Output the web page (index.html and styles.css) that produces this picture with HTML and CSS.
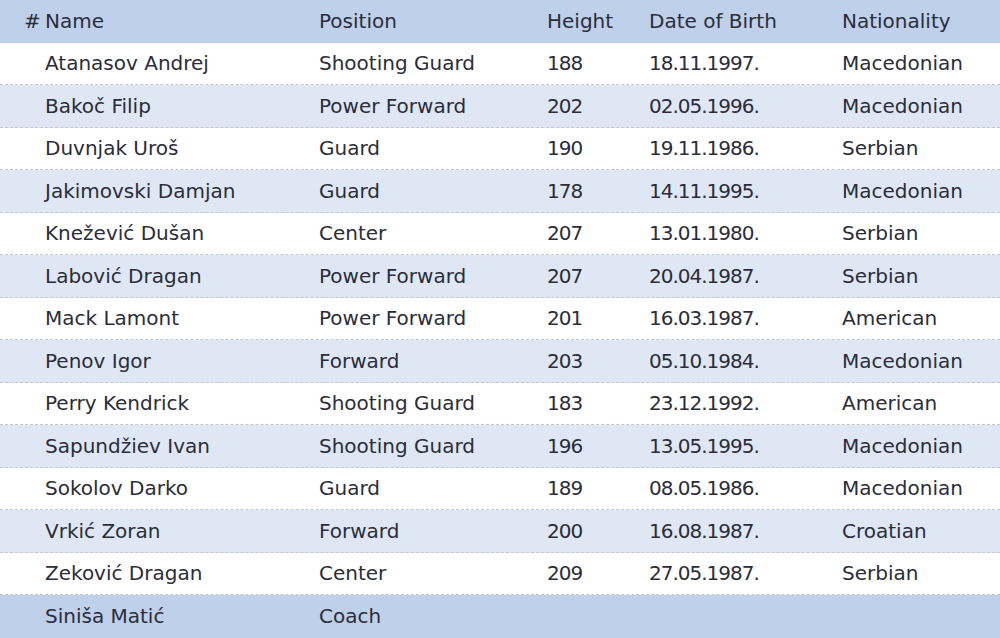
FILE: index.html
```html
<!DOCTYPE html>
<html>
<head>
<meta charset="utf-8">
<link rel="stylesheet" href="styles.css">
</head>
<body>
<div class="roster">
  <div class="row head">
    <div class="num">#</div><div>Name</div><div>Position</div><div>Height</div><div>Date of Birth</div><div>Nationality</div>
  </div>
  <div class="row"><div></div><div>Atanasov Andrej</div><div>Shooting Guard</div><div>188</div><div>18.11.1997.</div><div>Macedonian</div></div>
  <div class="row alt"><div></div><div>Bakoč Filip</div><div>Power Forward</div><div>202</div><div>02.05.1996.</div><div>Macedonian</div></div>
  <div class="row"><div></div><div>Duvnjak Uroš</div><div>Guard</div><div>190</div><div>19.11.1986.</div><div>Serbian</div></div>
  <div class="row alt"><div></div><div>Jakimovski Damjan</div><div>Guard</div><div>178</div><div>14.11.1995.</div><div>Macedonian</div></div>
  <div class="row"><div></div><div>Knežević Dušan</div><div>Center</div><div>207</div><div>13.01.1980.</div><div>Serbian</div></div>
  <div class="row alt"><div></div><div>Labović Dragan</div><div>Power Forward</div><div>207</div><div>20.04.1987.</div><div>Serbian</div></div>
  <div class="row"><div></div><div>Mack Lamont</div><div>Power Forward</div><div>201</div><div>16.03.1987.</div><div>American</div></div>
  <div class="row alt"><div></div><div>Penov Igor</div><div>Forward</div><div>203</div><div>05.10.1984.</div><div>Macedonian</div></div>
  <div class="row"><div></div><div>Perry Kendrick</div><div>Shooting Guard</div><div>183</div><div>23.12.1992.</div><div>American</div></div>
  <div class="row alt"><div></div><div>Sapundžiev Ivan</div><div>Shooting Guard</div><div>196</div><div>13.05.1995.</div><div>Macedonian</div></div>
  <div class="row"><div></div><div>Sokolov Darko</div><div>Guard</div><div>189</div><div>08.05.1986.</div><div>Macedonian</div></div>
  <div class="row alt"><div></div><div>Vrkić Zoran</div><div>Forward</div><div>200</div><div>16.08.1987.</div><div>Croatian</div></div>
  <div class="row"><div></div><div>Zeković Dragan</div><div>Center</div><div>209</div><div>27.05.1987.</div><div>Serbian</div></div>
  <div class="row coach"><div></div><div>Siniša Matić</div><div>Coach</div><div></div><div></div><div></div></div>
</div>
</body>
</html>
```

FILE: styles.css
```css
html, body {
  margin: 0;
  padding: 0;
  background: #ffffff;
}
.roster {
  width: 1000px;
  height: 638px;
  overflow: hidden;
  font-family: "DejaVu Sans", sans-serif;
  font-size: 20px;
  color: #2b2d3a;
}
.row {
  display: grid;
  grid-template-columns: 45px 274px 228px 102px 193px 158px;
  align-items: center;
  height: 42.5px;
  box-sizing: border-box;
  border-bottom: 1px dashed #c4c8ce;
  white-space: nowrap;
}
.row:not(.head) > div:nth-child(4),
.row:not(.head) > div:nth-child(5) {
  letter-spacing: -1px;
}
.row.alt {
  background: #dfe7f4;
}
.row.head {
  background: #bfd0ea;
  border-bottom: none;
}
.row.head .num {
  padding-left: 24px;
}
.row.coach {
  background: #bfd0ea;
  border-bottom: none;
}
```
